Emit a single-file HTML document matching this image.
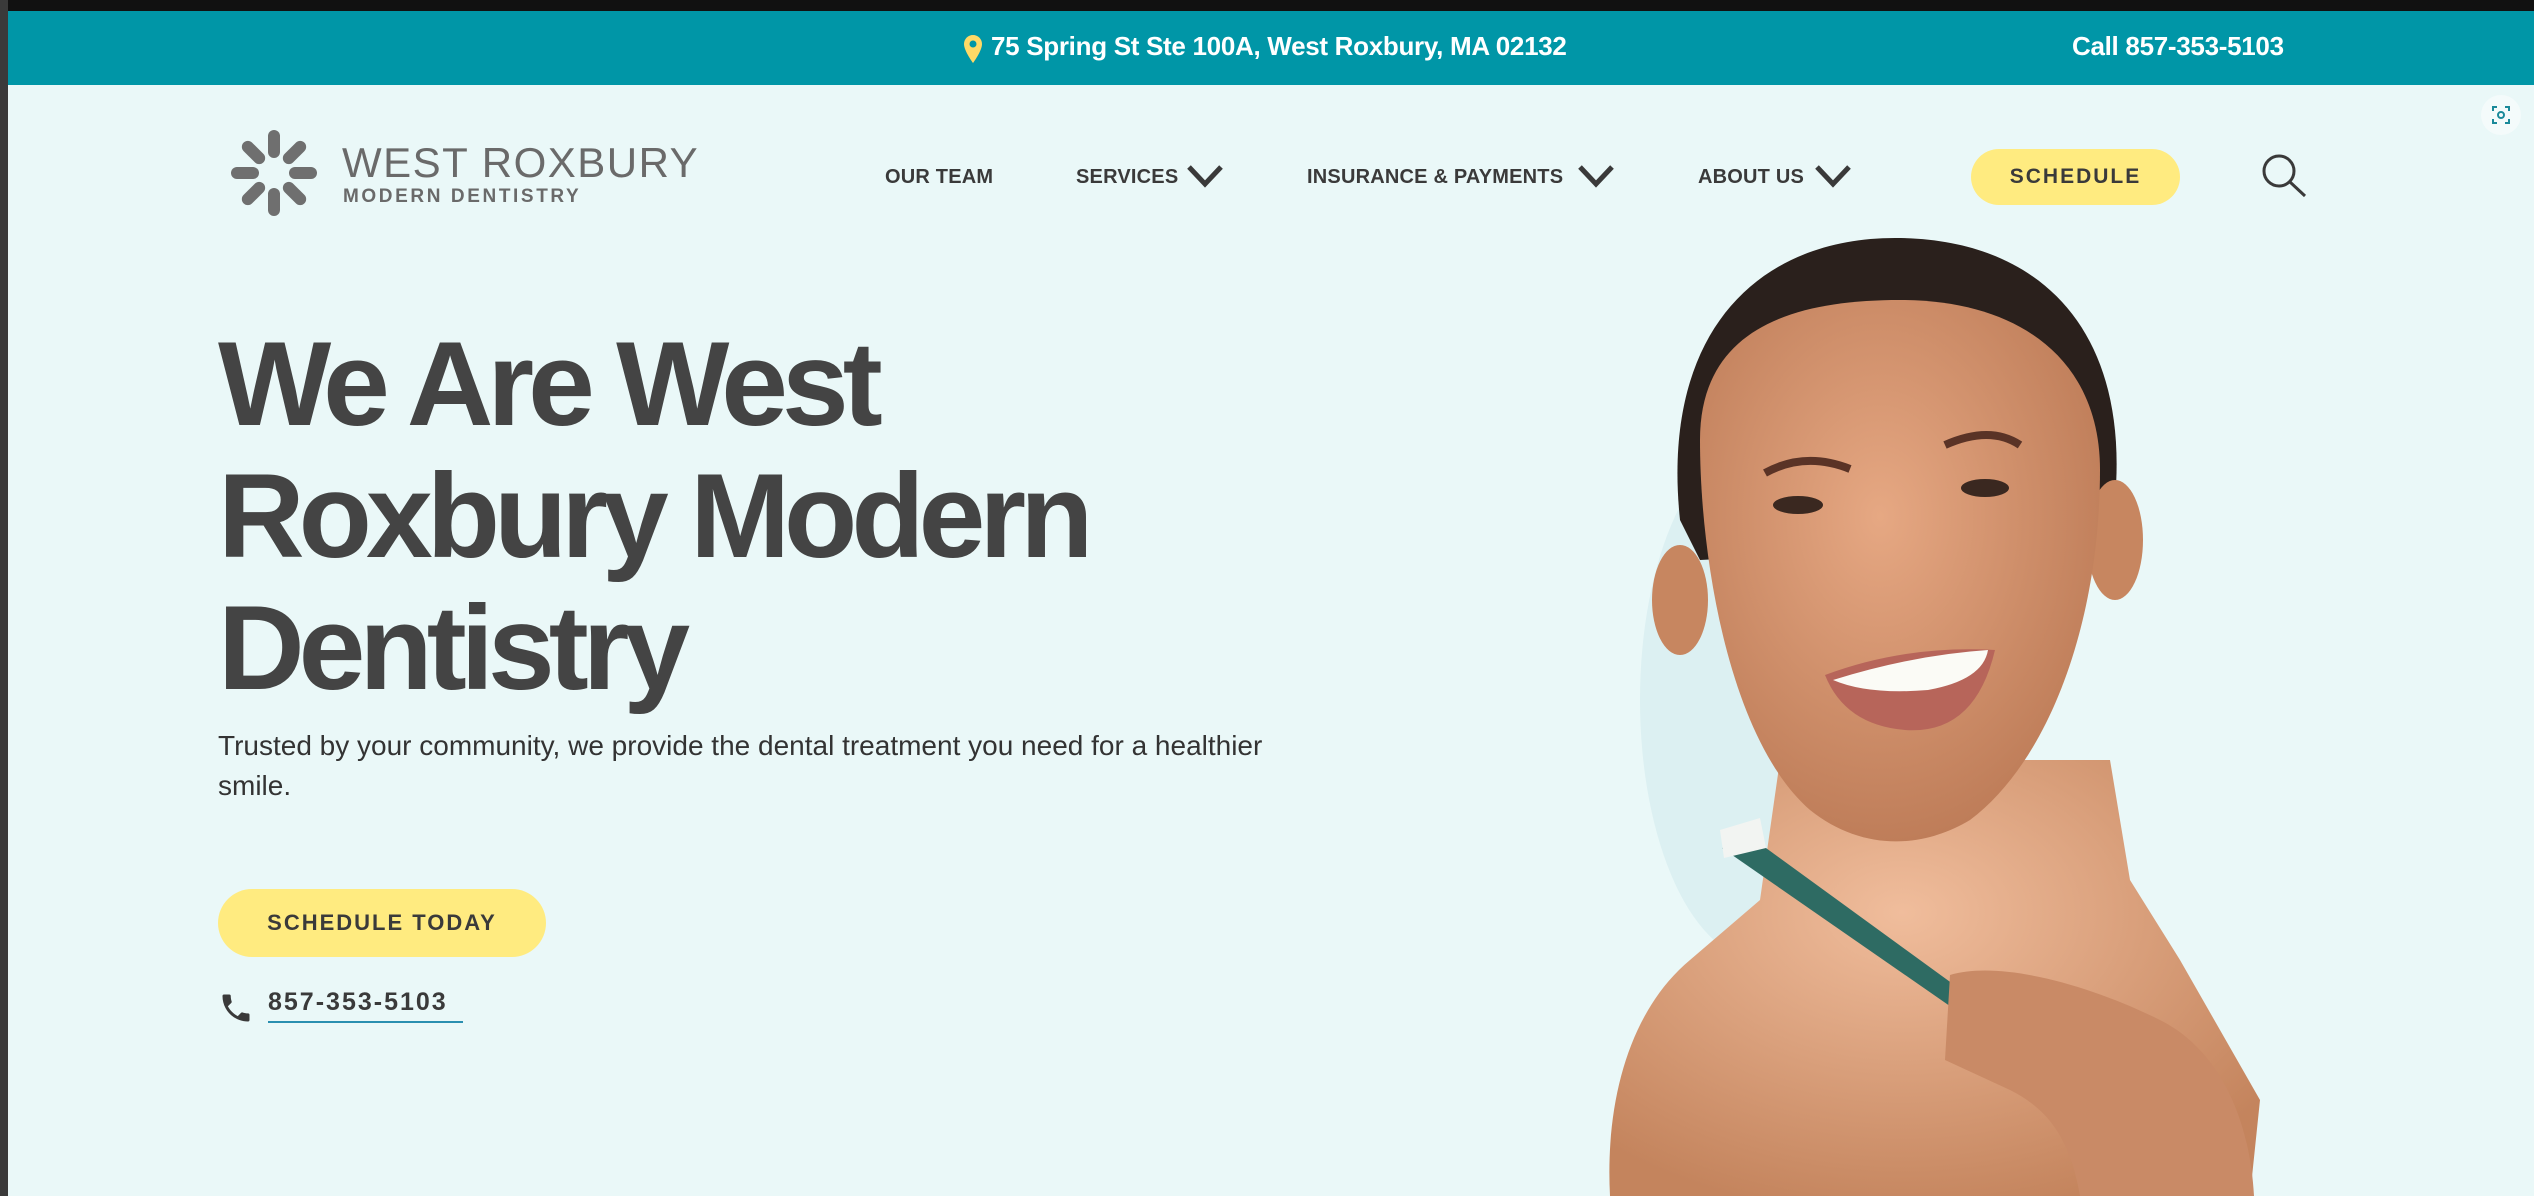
<!DOCTYPE html>
<html><head><meta charset="utf-8"><style>
*{margin:0;padding:0;box-sizing:border-box}
body{width:2534px;height:1196px;overflow:hidden;background:#eaf8f8;font-family:"Liberation Sans",sans-serif;position:relative;color:#444}
.abs{position:absolute}
#black{left:0;top:0;width:2534px;height:11px;background:#111}
#lb{left:0;top:0;width:8px;height:1196px;background:#3a3a3a}
#teal{left:8px;top:11px;width:2526px;height:74px;background:#0096a7}
.tb{color:#fff;font-weight:bold;font-size:26px;top:31px;white-space:nowrap;letter-spacing:-0.3px}
.nav{top:166px;font-size:20px;font-weight:bold;color:#3a3a3a;white-space:nowrap;letter-spacing:0.2px}
h1{position:absolute;left:218px;top:318px;font-size:120px;line-height:132px;font-weight:bold;color:#444;letter-spacing:-6px}
p.lead{position:absolute;left:218px;top:726px;width:1090px;font-size:28px;line-height:40px;color:#333}
.btn{background:#ffeb80;border-radius:40px;font-weight:bold;color:#3a3a3a;text-align:center;letter-spacing:2px}
</style></head><body>
<div class="abs" id="black"></div>
<div class="abs" id="teal"></div>
<div class="abs" id="lb"></div>
<svg class="abs" style="left:963px;top:34px" width="20" height="30" viewBox="0 0 20 30"><path d="M10 1C5 1 1 5 1 10c0 7 9 19 9 19s9-12 9-19c0-5-4-9-9-9z" fill="#ffd966"/><circle cx="10" cy="10" r="3.5" fill="#0096a7"/></svg>
<div class="abs tb" style="left:991px">75 Spring St Ste 100A, West Roxbury, MA 02132</div>
<div class="abs tb" style="left:2072px">Call 857-353-5103</div>

<svg class="abs" style="left:229px;top:128px" width="90" height="90" viewBox="-45 -45 90 90">
<g fill="#6f6f6f">
<rect x="-6" y="-43" width="12" height="28" rx="6"/>
<rect x="-6" y="-43" width="12" height="28" rx="6" transform="rotate(45)"/>
<rect x="-6" y="-43" width="12" height="28" rx="6" transform="rotate(90)"/>
<rect x="-6" y="-43" width="12" height="28" rx="6" transform="rotate(135)"/>
<rect x="-6" y="-43" width="12" height="28" rx="6" transform="rotate(180)"/>
<rect x="-6" y="-43" width="12" height="28" rx="6" transform="rotate(225)"/>
<rect x="-6" y="-43" width="12" height="28" rx="6" transform="rotate(270)"/>
<rect x="-6" y="-43" width="12" height="28" rx="6" transform="rotate(315)"/>
</g></svg>
<div class="abs" style="left:342px;top:139px;font-size:42px;color:#6a6a6a;letter-spacing:1.5px;white-space:nowrap">WEST ROXBURY</div>
<div class="abs" style="left:343px;top:186px;font-size:19px;font-weight:bold;color:#6a6a6a;letter-spacing:2.6px;white-space:nowrap">MODERN DENTISTRY</div>

<div class="abs nav" style="left:885px">OUR TEAM</div>
<div class="abs nav" style="left:1076px">SERVICES</div>
<svg class="abs" style="left:1186px;top:163px" width="38" height="26" viewBox="0 0 38 26"><path d="M3 4l16 17L35 4" fill="none" stroke="#3a3a3a" stroke-width="5"/></svg>
<div class="abs nav" style="left:1307px">INSURANCE &amp; PAYMENTS</div>
<svg class="abs" style="left:1577px;top:163px" width="38" height="26" viewBox="0 0 38 26"><path d="M3 4l16 17L35 4" fill="none" stroke="#3a3a3a" stroke-width="5"/></svg>
<div class="abs nav" style="left:1698px">ABOUT US</div>
<svg class="abs" style="left:1814px;top:163px" width="38" height="26" viewBox="0 0 38 26"><path d="M3 4l16 17L35 4" fill="none" stroke="#3a3a3a" stroke-width="5"/></svg>
<div class="abs btn" style="left:1971px;top:149px;width:209px;height:56px;line-height:56px;font-size:21px">SCHEDULE</div>
<svg class="abs" style="left:2260px;top:152px" width="50" height="46" viewBox="0 0 50 46"><circle cx="19" cy="19" r="15" fill="none" stroke="#3a3a3a" stroke-width="3"/><path d="M30 30l15 14" stroke="#3a3a3a" stroke-width="3"/></svg>
<div class="abs" style="left:2481px;top:95px;width:40px;height:40px;border-radius:20px;background:#f4fbfb"></div>
<svg class="abs" style="left:2491px;top:105px" width="20" height="20" viewBox="0 0 20 20"><path d="M2 6V2h4M14 2h4v4M18 14v4h-4M6 18H2v-4" fill="none" stroke="#1a8a9a" stroke-width="2"/><circle cx="10" cy="10" r="3" fill="none" stroke="#1a8a9a" stroke-width="2"/></svg>

<h1>We Are West<br>Roxbury Modern<br>Dentistry</h1>
<p class="lead">Trusted by your community, we provide the dental treatment you need for a healthier smile.</p>
<div class="abs btn" style="left:218px;top:889px;width:328px;height:68px;line-height:68px;font-size:22px">SCHEDULE TODAY</div>
<svg class="abs" style="left:218px;top:989px" width="36" height="38" viewBox="0 0 24 24"><path d="M6.6 10.8c1.4 2.8 3.8 5.1 6.6 6.6l2.2-2.2c.3-.3.7-.4 1-.2 1.1.4 2.3.6 3.6.6.6 0 1 .4 1 1V20c0 .6-.4 1-1 1C10.6 21 3 13.4 3 4c0-.6.4-1 1-1h3.5c.6 0 1 .4 1 1 0 1.3.2 2.5.6 3.6.1.3 0 .7-.2 1z" fill="#3a3a3a"/></svg>
<div class="abs" style="left:268px;top:988px;font-size:25px;font-weight:bold;color:#3a3a3a;letter-spacing:2px">857-353-5103</div>
<div class="abs" style="left:268px;top:1021px;width:195px;height:2px;background:#2a8fb0"></div>

<svg class="abs" style="left:1560px;top:220px" width="740" height="976" viewBox="1560 220 740 976">
<defs>
<radialGradient id="sk" cx="0.45" cy="0.4" r="0.7"><stop offset="0" stop-color="#e6a883"/><stop offset="1" stop-color="#b87652"/></radialGradient>
<radialGradient id="sh" cx="0.45" cy="0.35" r="0.7"><stop offset="0" stop-color="#f0bd9c"/><stop offset="1" stop-color="#c4845d"/></radialGradient>
</defs>
<ellipse cx="1760" cy="700" rx="120" ry="260" fill="#d8eef0" opacity="0.8"/>
<path d="M1680 520C1660 330 1760 238 1895 238C2040 238 2130 330 2115 500L2080 540L1700 560Z" fill="#2a201c"/>
<path d="M1780 760L1760 900L1690 960C1630 1010 1605 1100 1610 1196L2250 1196L2260 1100L2180 960L2130 880L2110 760Z" fill="url(#sh)"/>
<ellipse cx="1680" cy="600" rx="28" ry="55" fill="#c78660"/>
<ellipse cx="2115" cy="540" rx="28" ry="60" fill="#c78660"/>
<path d="M1700 440C1700 330 1790 300 1900 300C2020 300 2100 360 2100 470C2100 620 2050 760 1970 820C1920 850 1860 850 1810 810C1730 740 1700 560 1700 440Z" fill="url(#sk)"/>
<path d="M1765 473q40-22 85-4" stroke="#5a3326" stroke-width="8" fill="none"/>
<path d="M1945 445q45-20 75 0" stroke="#5a3326" stroke-width="8" fill="none"/>
<ellipse cx="1798" cy="505" rx="25" ry="9" fill="#3a2820"/>
<ellipse cx="1985" cy="488" rx="24" ry="9" fill="#3a2820"/>
<path d="M1825 675q80 -30 170 -25q-20 85 -90 80q-60 -5 -80 -55z" fill="#b7655a"/>
<path d="M1833 680q80 -25 155 -30q-5 30 -60 40q-60 5 -95 -10z" fill="#fbfbf6"/>
<path d="M1722 848L1755 840L2078 1075L2068 1088Z" fill="#2e6b63"/>
<path d="M1720 830l40 -12l6 30l-42 10z" fill="#f2f4f2"/>
<path d="M1950 975C2000 960 2090 985 2160 1020C2220 1050 2250 1120 2254 1196L2080 1196C2070 1140 2050 1110 2010 1090L1945 1060Z" fill="#c98a66"/>
</svg>
</body></html>
